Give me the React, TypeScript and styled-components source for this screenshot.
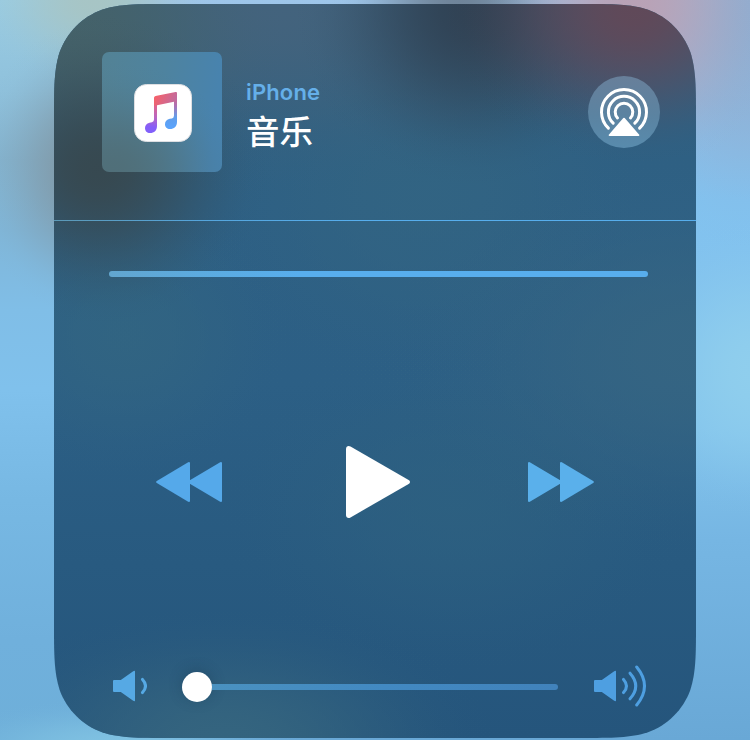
import React from "react";
import styled, { createGlobalStyle } from "styled-components";

const GlobalStyle = createGlobalStyle`
  * { box-sizing: border-box; }
  html, body { margin: 0; padding: 0; overflow: hidden; }
  body { background: #76b8e4; }
`;

/* A soft patch of colour with a bell-shaped falloff, so that no rim shows. */
const glow = (rx: number, ry: number, cx: number, cy: number, color: string, strength = 1) => {
  const stops = Array.from({ length: 11 }, (_, i) => {
    const t = i / 10;
    const a = Math.pow(Math.cos((t * Math.PI) / 2), 2) * strength;
    return `${color}${Math.round(a * 255).toString(16).padStart(2, "0")} ${t * 100}%`;
  });
  return `radial-gradient(ellipse ${rx}px ${ry}px at ${cx}px ${cy}px, ${stops.join(", ")})`;
};

const Wallpaper = styled.main`
  width: 750px;
  height: 740px;
  padding: 4px 54px 2px;
  overflow: hidden;
  font-family: "Inter", "Noto Sans CJK SC", sans-serif;
  background:
    ${glow(150, 180, 635, 0, "#b9a2b6")},
    ${glow(130, 80, 460, 0, "#6f8499")},
    ${glow(120, 150, 95, 170, "#8096a3")},
    ${glow(120, 90, 95, 0, "#a7c5c5")},
    ${glow(160, 240, 750, 10, "#8eaed2")},
    ${glow(130, 150, 755, 370, "#8fceed")},
    ${glow(190, 50, 120, 748, "#80c2e2")},
    linear-gradient(180deg, #9acce2 0, #8fc1dc 90px, #84b4d0 160px, #80b6d8 230px, #80bee7 310px, #80c1ec 390px, #77b8e3 500px, #70b0dc 640px, #6eafd9 740px) 0 0 / 130px 100% no-repeat,
    linear-gradient(180deg, #9ec6ea 0, #8fbce4 100px, #82c2ef 200px, #82c3ec 430px, #76b6e3 540px, #69a8d6 740px);
`;

/* Corners follow a continuous curve rather than a plain arc. */
const R = 76;
const W = 642;
const H = 734;
const k = (n: number) => +(n * R).toFixed(2);
const x = (n: number) => +(W - n * R).toFixed(2);
const y = (n: number) => +(H - n * R).toFixed(2);
const outline = [
  `M${k(1.5287)} 0H${x(1.5287)}`,
  `C${x(1.0885)} 0 ${x(0.8684)} 0 ${x(0.6315)} ${k(0.0749)}`,
  `C${x(0.3728)} ${k(0.1691)} ${x(0.1691)} ${k(0.3728)} ${x(0.0749)} ${k(0.6315)}`,
  `C${W} ${k(0.8684)} ${W} ${k(1.0885)} ${W} ${k(1.5287)}`,
  `V${y(1.5287)}`,
  `C${W} ${y(1.0885)} ${W} ${y(0.8684)} ${x(0.0749)} ${y(0.6315)}`,
  `C${x(0.1691)} ${y(0.3728)} ${x(0.3728)} ${y(0.1691)} ${x(0.6315)} ${y(0.0749)}`,
  `C${x(0.8684)} ${H} ${x(1.0885)} ${H} ${x(1.5287)} ${H}`,
  `H${k(1.5287)}`,
  `C${k(1.0885)} ${H} ${k(0.8684)} ${H} ${k(0.6315)} ${y(0.0749)}`,
  `C${k(0.3728)} ${y(0.1691)} ${k(0.1691)} ${y(0.3728)} ${k(0.0749)} ${y(0.6315)}`,
  `C0 ${y(0.8684)} 0 ${y(1.0885)} 0 ${y(1.5287)}`,
  `V${k(1.5287)}`,
  `C0 ${k(1.0885)} 0 ${k(0.8684)} ${k(0.0749)} ${k(0.6315)}`,
  `C${k(0.1691)} ${k(0.3728)} ${k(0.3728)} ${k(0.1691)} ${k(0.6315)} ${k(0.0749)}`,
  `C${k(0.8684)} 0 ${k(1.0885)} 0 ${k(1.5287)} 0Z`,
].join("");

const Panel = styled.section`
  display: flex;
  flex-direction: column;
  width: ${W}px;
  height: ${H}px;
  clip-path: path("${outline}");
  background:
    ${glow(190, 155, 580, 5, "#604959")},
    ${glow(180, 180, 420, 2, "#304254")},
    ${glow(170, 155, 44, 165, "#37484f", 0.97)},
    ${glow(210, 190, 20, 25, "#456269", 0.95)},
    ${glow(380, 190, 220, 0, "#43637d")},
    ${glow(330, 200, 650, 350, "#376682", 0.8)},
    ${glow(170, 150, 70, 330, "#336681", 0.7)},
    ${glow(230, 200, 370, 190, "#336582", 0.7)},
    ${glow(240, 170, 400, 500, "#2f6280", 0.6)},
    ${glow(270, 130, 170, 734, "#35657f", 0.95)},
    linear-gradient(180deg, #31607f 0, #2e6084 200px, #2c5f85 380px, #285a80 560px, #25557c 734px);
`;

const Header = styled.header`
  display: flex;
  align-items: center;
  flex: 0 0 217px;
  padding: 0 36px 0 48px;
  border-bottom: 1px solid;
  border-image: linear-gradient(90deg, #5c99b7 0, #55a5dc 150px, #57aeed 300px, #57aeed) 1;
`;

const Artwork = styled.div`
  display: flex;
  align-items: flex-start;
  width: 120px;
  height: 120px;
  padding: 32px;
  border-radius: 7px;
  background:
    ${glow(130, 110, 10, 120, "#506f79")},
    linear-gradient(97deg, #538295 0, #4e839f 48%, #4883ae 90%);
`;

const AppIcon = styled.svg`
  display: block;
  flex: none;
  width: 58px;
  height: 58px;
`;

const TrackInfo = styled.div`
  flex: 1;
  align-self: flex-start;
  padding: 76px 0 0 24px;
`;

const Device = styled.div`
  height: 24px;
  line-height: 24px;
  font-size: 22px;
  font-weight: 600;
  letter-spacing: 0.15px;
  color: #65afe9;
`;

const Title = styled.div`
  height: 44px;
  margin-top: 4px;
  line-height: 44px;
  font-family: "Noto Sans CJK SC", sans-serif;
  font-size: 33.5px;
  font-weight: 500;
  color: #fff;
`;

const Button = styled.button`
  display: block;
  padding: 0;
  border: 0;
  background: none;
  svg { display: block; }
`;

const AirPlayButton = styled(Button)`
  width: 72px;
  height: 72px;
  border-radius: 50%;
  background: linear-gradient(180deg, #687f9a, #5b83a1 55%, #588bad);
`;

const Progress = styled.div`
  flex: none;
  height: 6px;
  margin: 50px 48px 0 55px;
  border-radius: 3px;
  background: linear-gradient(90deg, #62a6cf 0, #5cabdf 90px, #58aeed 190px, #58aeed);
`;

const Controls = styled.div`
  display: flex;
  align-items: center;
  flex: none;
  height: 72px;
  margin: 169px 102px 0;
`;

const PlayButton = styled(Button)`
  margin: 0 118px 0 124px;
`;

const Volume = styled.div`
  display: flex;
  align-items: center;
  flex: none;
  height: 44px;
  margin: 146px 48px 0 59px;
  svg { display: block; flex: none; }
`;

const Slider = styled.div`
  display: flex;
  align-items: center;
  width: 376px;
  margin: 2px 36px 0 35px;
`;

const Knob = styled.div`
  flex: none;
  width: 30px;
  height: 30px;
  border-radius: 50%;
  background: #fff;
  box-shadow: 0 -2px 14px rgba(20, 48, 70, 0.3);
`;

const Track = styled.div`
  flex: 1;
  height: 6px;
  border-radius: 0 3px 3px 0;
  background: linear-gradient(90deg, #4a91c0, #4289c2 50%, #4182bb);
`;

const MusicIcon = () => (
  <AppIcon viewBox="0 0 58 58">
    <defs>
      <linearGradient id="beam" gradientUnits="userSpaceOnUse" x1="20" y1="10" x2="43" y2="22">
        <stop stopColor="#fb6065" />
        <stop offset="1" stopColor="#b76ea8" />
      </linearGradient>
      <linearGradient id="low" gradientUnits="userSpaceOnUse" x1="22" y1="14" x2="16" y2="48">
        <stop stopColor="#f7626a" />
        <stop offset="0.55" stopColor="#b966c0" />
        <stop offset="0.85" stopColor="#855ef8" />
        <stop offset="1" stopColor="#8160fa" />
      </linearGradient>
      <linearGradient id="high" gradientUnits="userSpaceOnUse" x1="40" y1="10" x2="38" y2="43">
        <stop stopColor="#db6581" />
        <stop offset="0.35" stopColor="#ad71b3" />
        <stop offset="0.7" stopColor="#609eeb" />
        <stop offset="1" stopColor="#5aa3fb" />
      </linearGradient>
    </defs>
    <rect x="0.5" y="0.5" width="57" height="57" rx="12" fill="#fff" stroke="#dedfe2" />
    <path fill="url(#low)" d="M20 14V35.5Q20 37.8 18 38.2L15.5 38.7C12.5 39.4 11 41.3 11 44C11 47 13 49 16 49C20.2 49 23 46.5 23 42V19Z" />
    <path fill="url(#high)" d="M43 9V38C43 42.5 40 45 36 45C33 45 31 43 31 40.2C31 37.4 32.7 35.4 35.8 34.8L38 34.4Q40 34 40 31.5V15Z" />
    <path fill="url(#beam)" d="M20 13.8Q20 12.4 21.5 12L41.6 8Q43 7.7 43 9V17.2L40 17.8L23 21.3L20 22Z" />
  </AppIcon>
);

const AirPlayIcon = () => (
  <svg width="72" height="72" viewBox="0 0 72 72" fill="none" stroke="#fff" strokeWidth="3" strokeLinecap="round">
    <path d="M20.4 52.2A22.5 22.5 0 1 1 51.6 52.2" />
    <path d="M25.2 47.2A15.6 15.6 0 1 1 46.8 47.2" />
    <path d="M29.5 42A8.8 8.8 0 1 1 42.5 42" />
    <path d="M35.3 42.1Q36 41.4 36.7 42.1L51 58.4Q52 60 50.5 60H21.5Q20 60 21 58.4Z" fill="#fff" stroke="none" />
  </svg>
);

const SkipIcon = ({ back = false }: { back?: boolean }) => (
  <svg width="66" height="40" viewBox="0 0 66 40" fill={back ? "#55a9ea" : "#5ab0eb"}>
    <g transform={back ? "matrix(-1 0 0 1 66 0)" : undefined}>
      <path d="M0 1Q.2-.3 1.8.2L33 18.7V21.3L1.8 39.8Q.2 40.3 0 39Z" />
      <path d="M32 1Q32.2-.3 33.8.2L65.2 18.9Q66.6 20 65.2 21.1L33.8 39.8Q32.2 40.3 32 39Z" />
    </g>
  </svg>
);

const PlayIcon = () => (
  <svg width="64" height="72" viewBox="0 0 64 72" fill="#fff">
    <path d="M0 3C0 .5 2.2-.7 4.5.6L62.2 33.7C64.6 35.1 64.6 36.9 62.2 38.3L4.5 71.4C2.2 72.7 0 71.5 0 69Z" />
  </svg>
);

const speaker = "M1 16H7.8L20.2 7.3Q22 6.2 22 7.6V36.4Q22 37.8 20.2 36.7L7.8 28H1Q0 28 0 27V17Q0 16 1 16Z";

const SpeakerIcon = ({ loud = false }: { loud?: boolean }) => {
  const color = loud ? "#4e9fe1" : "#56a9e4";
  return (
    <svg width={loud ? 53 : 34} height="44" viewBox={loud ? "0 0 53 44" : "0 0 34 44"} fill="none" stroke={color} strokeWidth="3" strokeLinecap="round">
      <path d={speaker} fill={color} stroke="none" />
      <path d="M29.5 15.4Q35.5 22 29.5 28.6" />
      {loud && <path d="M36 9.2Q47.5 22 36 34.8" />}
      {loud && <path d="M42.7 3Q58.3 22 42.7 41" />}
    </svg>
  );
};

export default function App() {
  return (
    <>
      <GlobalStyle />
      <Wallpaper>
        <Panel>
          <Header>
            <Artwork><MusicIcon /></Artwork>
            <TrackInfo>
              <Device>iPhone</Device>
              <Title>音乐</Title>
            </TrackInfo>
            <AirPlayButton aria-label="AirPlay"><AirPlayIcon /></AirPlayButton>
          </Header>
          <Progress />
          <Controls>
            <Button aria-label="Previous"><SkipIcon back /></Button>
            <PlayButton aria-label="Play"><PlayIcon /></PlayButton>
            <Button aria-label="Next"><SkipIcon /></Button>
          </Controls>
          <Volume>
            <SpeakerIcon />
            <Slider>
              <Knob />
              <Track />
            </Slider>
            <SpeakerIcon loud />
          </Volume>
        </Panel>
      </Wallpaper>
    </>
  );
}
